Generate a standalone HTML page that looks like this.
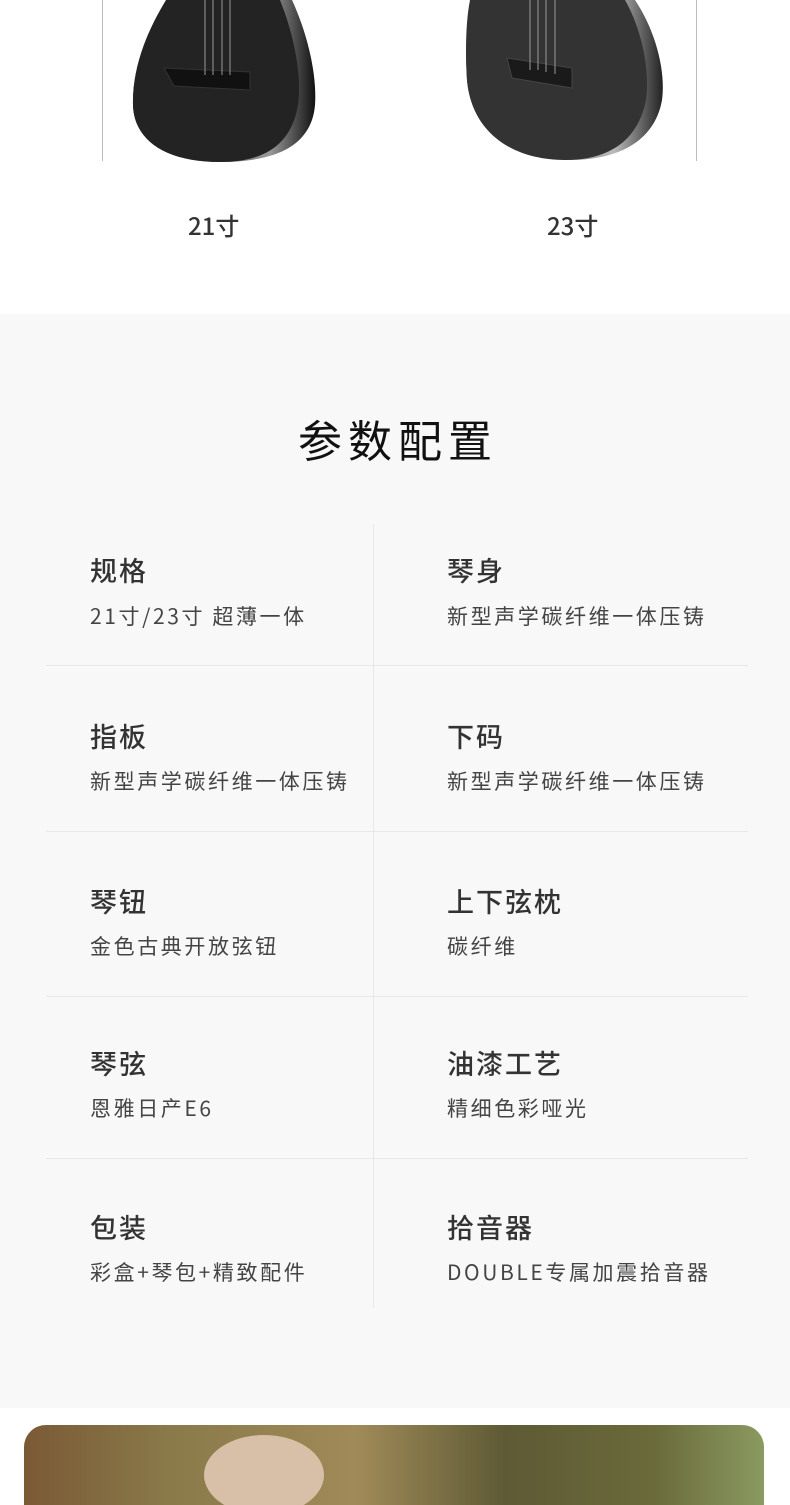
<!DOCTYPE html>
<html><head><meta charset="utf-8">
<style>
*{margin:0;padding:0;box-sizing:border-box}
body{width:790px;height:1480px;overflow:hidden;background:#fff;font-family:"Liberation Sans","Noto Sans CJK SC",sans-serif;position:relative}
.abs{position:absolute}
.size{font-size:24px;color:#333;top:207px;letter-spacing:0;font-family:"Noto Sans CJK SC",sans-serif;font-weight:500}
.grey{left:0;top:314px;width:790px;height:1094px;background:#f8f8f8}
.title{top:412px;left:0;width:790px;text-align:center;font-size:44px;color:#111;letter-spacing:6px;padding-left:6px;font-family:"Noto Sans CJK SC",sans-serif;font-weight:400;line-height:1.2}
.hl{left:46px;width:702px;height:1px;background:#e8e8e8}
.vl{left:373px;top:524px;width:1px;height:784px;background:#e8e8e8}
.lab{font-size:27px;color:#333;font-weight:500;letter-spacing:2px;line-height:1;font-family:"Noto Sans CJK SC",sans-serif}
.val{font-size:21px;color:#444;letter-spacing:2.6px;line-height:1;font-family:"Noto Sans CJK SC",sans-serif}
.photo{left:24px;top:1425px;width:740px;height:80px;border-radius:22px 22px 0 0;background:linear-gradient(90deg,#7a5a35 0%,#8a7a4a 20%,#a08a58 45%,#5e5a35 65%,#6a6a3a 85%,#8a9a60 100%);overflow:hidden}
</style></head><body>
<div class="abs" style="left:102px;top:0;width:1px;height:161px;background:#bbb"></div>
<div class="abs" style="left:696px;top:0;width:1px;height:161px;background:#bbb"></div>
<svg class="abs" style="left:120px;top:0" width="210" height="170">
<defs><linearGradient id="e1" x1="0" x2="1"><stop offset="0" stop-color="#222"/><stop offset="0.75" stop-color="#999"/><stop offset="1" stop-color="#111"/></linearGradient></defs>
<path d="M48 0 L172 0 C188 35 197 75 195 105 C192 140 165 162 100 162 C45 162 14 140 13 105 C12 65 30 28 48 0Z" fill="url(#e1)"/>
<path d="M46 0 L160 0 C174 35 182 75 178 105 C172 140 150 162 100 162 C45 162 14 140 13 105 C12 65 29 28 46 0Z" fill="#232323"/>
<path d="M44 68 L130 72 L130 90 L54 86 Z" fill="#111" stroke="#333"/>
<line x1="85" y1="0" x2="85" y2="75" stroke="#999"/><line x1="93" y1="0" x2="93" y2="75" stroke="#999"/><line x1="102" y1="0" x2="102" y2="75" stroke="#999"/><line x1="110" y1="0" x2="110" y2="75" stroke="#999"/>
</svg>
<svg class="abs" style="left:460px;top:0" width="210" height="165">
<defs><linearGradient id="e2" x1="0" x2="1"><stop offset="0" stop-color="#222"/><stop offset="0.75" stop-color="#bbb"/><stop offset="1" stop-color="#222"/></linearGradient></defs>
<path d="M12 0 L175 0 C195 30 206 70 202 100 C195 140 160 160 110 160 C55 160 12 135 7 80 C5 50 7 20 12 0Z" fill="url(#e2)"/>
<path d="M10 0 L165 0 C182 30 190 70 186 100 C178 140 150 160 105 160 C55 160 12 135 7 80 C5 50 6 20 10 0Z" fill="#333"/>
<path d="M47 58 L112 68 L112 88 L52 78 Z" fill="#1a1a1a" stroke="#444"/>
<line x1="70" y1="0" x2="70" y2="70" stroke="#999"/><line x1="78" y1="0" x2="78" y2="70" stroke="#999"/><line x1="86" y1="0" x2="86" y2="72" stroke="#999"/><line x1="95" y1="0" x2="95" y2="74" stroke="#999"/>
</svg>
<div class="abs size" style="left:188px">21寸</div>
<div class="abs size" style="left:547px">23寸</div>

<div class="abs grey"></div>
<div class="abs title">参数配置</div>
<div class="abs vl"></div>
<div class="abs hl" style="top:665px"></div>
<div class="abs hl" style="top:831px"></div>
<div class="abs hl" style="top:996px"></div>
<div class="abs hl" style="top:1158px"></div>

<div class="abs lab" style="left:90px;top:556px">规格</div>
<div class="abs val" style="left:90px;top:606px">21寸/23寸 超薄一体</div>
<div class="abs lab" style="left:447px;top:556px">琴身</div>
<div class="abs val" style="left:447px;top:606px">新型声学碳纤维一体压铸</div>

<div class="abs lab" style="left:90px;top:722px">指板</div>
<div class="abs val" style="left:90px;top:771px">新型声学碳纤维一体压铸</div>
<div class="abs lab" style="left:447px;top:722px">下码</div>
<div class="abs val" style="left:447px;top:771px">新型声学碳纤维一体压铸</div>

<div class="abs lab" style="left:90px;top:887px">琴钮</div>
<div class="abs val" style="left:90px;top:936px">金色古典开放弦钮</div>
<div class="abs lab" style="left:447px;top:887px">上下弦枕</div>
<div class="abs val" style="left:447px;top:936px">碳纤维</div>

<div class="abs lab" style="left:90px;top:1049px">琴弦</div>
<div class="abs val" style="left:90px;top:1098px">恩雅日产E6</div>
<div class="abs lab" style="left:447px;top:1049px">油漆工艺</div>
<div class="abs val" style="left:447px;top:1098px">精细色彩哑光</div>

<div class="abs lab" style="left:90px;top:1213px">包装</div>
<div class="abs val" style="left:90px;top:1262px">彩盒+琴包+精致配件</div>
<div class="abs lab" style="left:447px;top:1213px">拾音器</div>
<div class="abs val" style="left:447px;top:1262px">DOUBLE专属加震拾音器</div>

<div class="abs photo"><div style="position:absolute;left:180px;top:10px;width:120px;height:80px;border-radius:50%;background:#d8c0a8"></div></div>
</body></html>
